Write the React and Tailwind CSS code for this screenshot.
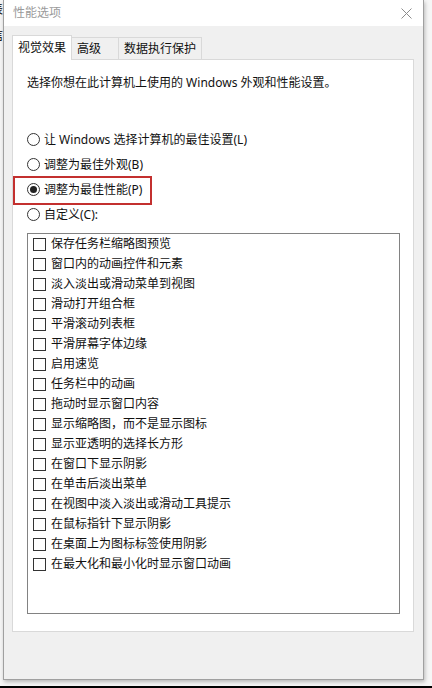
import React from 'react';

const items = [
  '保存任务栏缩略图预览',
  '窗口内的动画控件和元素',
  '淡入淡出或滑动菜单到视图',
  '滑动打开组合框',
  '平滑滚动列表框',
  '平滑屏幕字体边缘',
  '启用速览',
  '任务栏中的动画',
  '拖动时显示窗口内容',
  '显示缩略图，而不是显示图标',
  '显示亚透明的选择长方形',
  '在窗口下显示阴影',
  '在单击后淡出菜单',
  '在视图中淡入淡出或滑动工具提示',
  '在鼠标指针下显示阴影',
  '在桌面上为图标标签使用阴影',
  '在最大化和最小化时显示窗口动画',
];

const radios = [
  { label: '让 Windows 选择计算机的最佳设置(L)' },
  { label: '调整为最佳外观(B)' },
  { label: '调整为最佳性能(P)', checked: true, marked: true },
  { label: '自定义(C):' },
];

function Radio({ checked }) {
  return (
    <span className="w-[13px] h-[13px] rounded-full border border-[#333] bg-white flex items-center justify-center shrink-0">
      {checked && <span className="w-[7px] h-[7px] rounded-full bg-[#222]" />}
    </span>
  );
}

function Checkbox() {
  return <span className="w-[13px] h-[13px] border border-[#333] bg-white shrink-0" />;
}

export default function App() {
  return (
    <div className="relative w-[432px] h-[688px] bg-[#f6f6f6] overflow-hidden text-[12px] leading-[16px] text-[#111] font-['Noto_Sans','Noto_Sans_CJK_SC',sans-serif]">
      {/* bits of the window behind, cut by the left edge */}
      <span className="absolute left-[-9px] top-[2px] text-[12px] text-black">表</span>
      <span className="absolute left-[-9px] top-[28px] text-[12px] text-black">信</span>

      <div className="relative ml-[3px] w-[421px] h-[680px] flex flex-col bg-[#f0f0f0] border-l border-r border-b border-[#a0a0a0] shadow-[1px_2px_4px_rgba(0,0,0,0.25)]">
        {/* title bar */}
        <div className="h-[26px] bg-white flex items-center justify-between pl-[9px] pr-[11px]">
          <span className="text-[12px] text-[#9a9a9a]">性能选项</span>
          <svg width="11" height="11" viewBox="0 0 11 11">
            <path d="M0.5 0.5L10.5 10.5M10.5 0.5L0.5 10.5" stroke="#8c8c8c" strokeWidth="1" />
          </svg>
        </div>

        <div className="pt-[9px] px-[8px]">
          {/* tabs */}
          <div className="flex items-end h-[24px]">
            <div className="relative z-10 -mb-px w-[60px] h-[25px] bg-white border-t border-l border-r border-[#d9d9d9] flex items-center justify-center">
              视觉效果
            </div>
            <div className="w-[47px] h-[22px] bg-[#f0f0f0] border-t border-r border-[#d9d9d9] flex items-center pl-[5px]">
              高级
            </div>
            <div className="w-[83px] h-[22px] bg-[#f0f0f0] border-t border-r border-[#d9d9d9] flex items-center justify-center">
              数据执行保护
            </div>
          </div>

          {/* panel */}
          <div className="w-[402px] h-[573px] bg-white border border-[#d9d9d9] pl-[14px] pt-[15px]">
            <p>选择你想在此计算机上使用的 Windows 外观和性能设置。</p>

            <div className="mt-[36px] flex flex-col">
              {radios.map((r) => (
                <div key={r.label} className="relative h-[25px] flex items-center gap-[4px]">
                  <Radio checked={r.checked} />
                  <span>{r.label}</span>
                  {r.marked && (
                    <span className="absolute left-[-14px] top-[-1px] w-[139px] h-[29px] border-2 border-[#c3302f]" />
                  )}
                </div>
              ))}
            </div>

            <div className="mt-[6px] w-[373px] h-[381px] border border-[#828282] pl-[5px]">
              {items.map((t) => (
                <div key={t} className="h-[20px] flex items-center gap-[5px]">
                  <Checkbox />
                  <span>{t}</span>
                </div>
              ))}
            </div>
          </div>
        </div>
      </div>

      <div className="mt-[6px] h-[2px] bg-black" />
    </div>
  );
}
